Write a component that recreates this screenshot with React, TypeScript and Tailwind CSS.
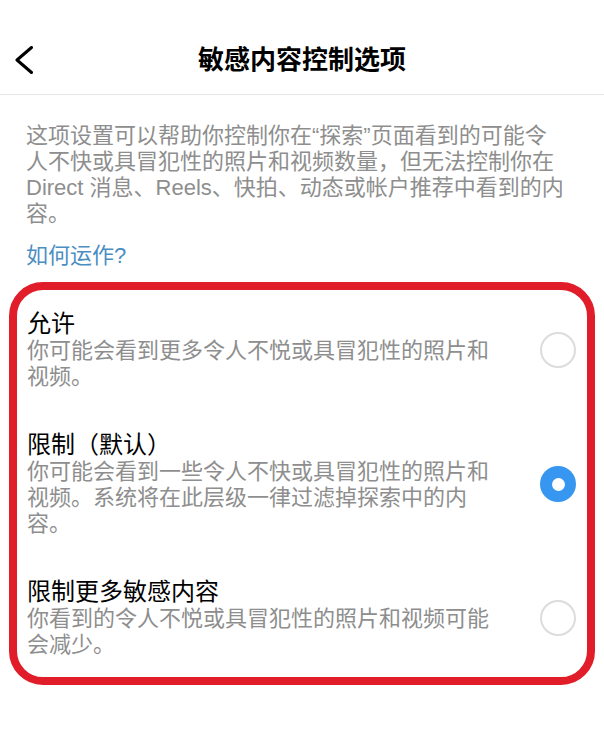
import React, { useState } from "react";

const options = [
  {
    id: "allow",
    title: "允许",
    desc: "你可能会看到更多令人不悦或具冒犯性的照片和视频。",
  },
  {
    id: "limit",
    title: "限制（默认）",
    desc: "你可能会看到一些令人不快或具冒犯性的照片和视频。系统将在此层级一律过滤掉探索中的内容。",
  },
  {
    id: "limit_more",
    title: "限制更多敏感内容",
    desc: "你看到的令人不悦或具冒犯性的照片和视频可能会减少。",
  },
];

const Radio = ({ checked }: { checked: boolean }) =>
  checked ? (
    <span className="flex h-[36px] w-[36px] shrink-0 items-center justify-center rounded-full bg-[#3797f0]">
      <span className="h-[13px] w-[13px] rounded-full bg-white" />
    </span>
  ) : (
    <span className="h-[36px] w-[36px] shrink-0 rounded-full border-2 border-[#dcdcdc]" />
  );

export default function App() {
  const [selected, setSelected] = useState("limit");

  return (
    <div className="min-h-[729px] w-full bg-white font-['Liberation_Sans','Noto_Sans_CJK_SC',sans-serif]">
      {/* Header */}
      <div className="grid h-[95px] grid-cols-[1fr_auto_1fr] items-center border-b border-[#e6e6e6] pt-[26px]">
        <button className="flex items-center pl-[15px]">
          <svg width="18" height="28" viewBox="0 0 18 28" fill="none">
            <polyline
              points="16.5,1.5 2,14 16.5,26.5"
              stroke="#000"
              strokeWidth="3"
              strokeLinecap="round"
              strokeLinejoin="round"
            />
          </svg>
        </button>
        <h1 className="text-[26px] font-semibold leading-[34px] text-black">敏感内容控制选项</h1>
        <div />
      </div>

      {/* Intro */}
      <div className="pl-[26px] pr-[38px] pt-[28px]">
        <p className="text-[22px] leading-[26px] text-[#8e8e8e]">
          这项设置可以帮助你控制你在“探索”页面看到的可能令人不快或具冒犯性的照片和视频数量，但无法控制你在 Direct 消息、Reels、快拍、动态或帐户推荐中看到的内容。
        </p>
        <a className="mt-[16px] block text-[22px] leading-[26px] text-[#4b8ec2]">如何运作?</a>
      </div>

      {/* Options */}
      <div className="mx-[9px] mt-[13px] flex flex-col gap-[41px] rounded-[34px] border-[8px] border-[#e11d2a] pb-[19px] pl-[10px] pr-[11px] pt-[20px]">
        {options.map((o) => (
          <div
            key={o.id}
            onClick={() => setSelected(o.id)}
            className="flex cursor-pointer items-center justify-between"
          >
            <div className="w-[470px]">
              <div className="text-[24px] leading-[28px] text-black">{o.title}</div>
              <div className="text-[22px] leading-[26px] text-[#8e8e8e]">{o.desc}</div>
            </div>
            <Radio checked={selected === o.id} />
          </div>
        ))}
      </div>
    </div>
  );
}
